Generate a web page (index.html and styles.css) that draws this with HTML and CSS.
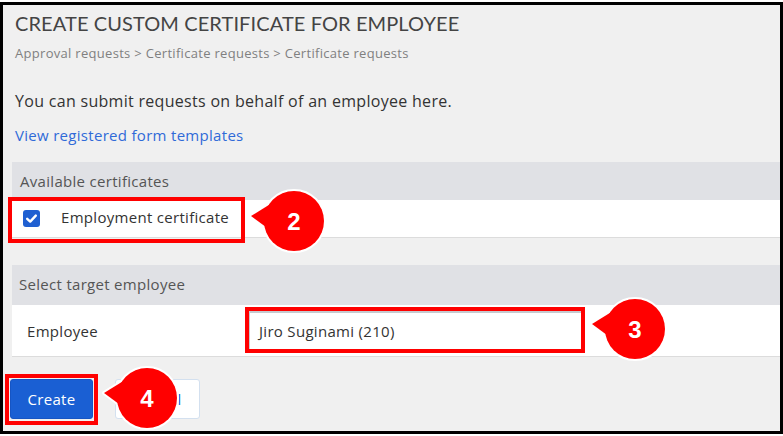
FILE: index.html
```html
<!DOCTYPE html>
<html lang="en">
<head>
<meta charset="utf-8">
<title>Create custom certificate for employee</title>
<link rel="stylesheet" href="styles.css">
</head>
<body>
<div class="frame">
  <h1 class="title">CREATE CUSTOM CERTIFICATE FOR EMPLOYEE</h1>
  <div class="crumbs">Approval requests &gt; Certificate requests &gt; Certificate requests</div>
  <p class="intro">You can submit requests on behalf of an employee here.</p>
  <a class="link" href="#">View registered form templates</a>

  <section class="section sec-certs">
    <div class="band">Available certificates</div>
    <div class="row row-check">
      <span class="checkbox">
        <svg width="17" height="17" viewBox="0 0 17 17"><rect x="0" y="0" width="17" height="17" rx="3" fill="#1f5fd1"/><path d="M4.2 8.8 L7.2 11.6 L12.8 5.6" fill="none" stroke="#fff" stroke-width="2.4" stroke-linecap="round" stroke-linejoin="round"/></svg>
      </span>
      <span class="check-label">Employment certificate</span>
    </div>
  </section>

  <section class="section sec-emp">
    <div class="band band-emp">Select target employee</div>
    <div class="row row-emp">
      <span class="emp-label">Employee</span>
      <div class="input">Jiro Suginami (210)</div>
    </div>
  </section>

  <div class="actions">
    <button class="btn btn-primary">Create</button>
    <button class="btn btn-secondary">Cancel</button>
  </div>

  <div class="hl hl-check"></div>
  <div class="hl hl-input"></div>
  <div class="hl hl-create"></div>

  <svg class="callout c2" width="84" height="70" viewBox="0 0 84 70">
    <g fill="#fff" stroke="#fff" stroke-width="4" stroke-linejoin="round"><path d="M3 28 L24 15 L22 42 Z"/><circle cx="46" cy="33" r="30"/></g>
    <g fill="#f00"><path d="M3 28 L24 15 L22 42 Z"/><circle cx="46" cy="33" r="30"/></g>
    <text x="46" y="42" text-anchor="middle">2</text>
  </svg>
  <svg class="callout c3" width="84" height="70" viewBox="0 0 84 70">
    <g fill="#fff" stroke="#fff" stroke-width="4" stroke-linejoin="round"><path d="M3 28 L24 15 L22 42 Z"/><circle cx="46" cy="33" r="30"/></g>
    <g fill="#f00"><path d="M3 28 L24 15 L22 42 Z"/><circle cx="46" cy="33" r="30"/></g>
    <text x="46" y="42" text-anchor="middle">3</text>
  </svg>
  <svg class="callout c4" width="84" height="70" viewBox="0 0 84 70">
    <g fill="#fff" stroke="#fff" stroke-width="4" stroke-linejoin="round"><path d="M3 28 L24 15 L22 42 Z"/><circle cx="46" cy="33" r="30"/></g>
    <g fill="#f00"><path d="M3 28 L24 15 L22 42 Z"/><circle cx="46" cy="33" r="30"/></g>
    <text x="46" y="42" text-anchor="middle">4</text>
  </svg>
</div>
</body>
</html>
```

FILE: styles.css
```css
* { box-sizing: border-box; }
html, body { margin: 0; padding: 0; background: #fff; }
body { font-family: "Open Sans", Lato, sans-serif; color: #333; letter-spacing: 0.3px; }

.frame {
  position: relative;
  margin-top: 2px;
  width: 783px;
  height: 432px;
  border: 3px solid #000;
  background: #f0f0f0;
  overflow: hidden;
  display: flex;
  flex-direction: column;
  align-items: flex-start;
}

.title {
  margin: 0;
  padding: 6px 12px 0;
  font-family: Lato, "Open Sans", sans-serif;
  font-size: 20px;
  line-height: 24px;
  font-weight: 400;
  color: #444;
  letter-spacing: 0.1px;
}
.crumbs {
  margin-top: 9px;
  padding-left: 12px;
  font-size: 13px;
  line-height: 18px;
  color: #808080;
}
.intro {
  margin: 29px 0 0;
  padding-left: 12px;
  font-size: 16px;
  line-height: 20px;
  color: #333;
}
.link {
  margin-top: 14px;
  margin-left: 12px;
  font-size: 15px;
  line-height: 20px;
  color: #2f6ad8;
  text-decoration: none;
}

.section {
  margin-left: 9px;
  align-self: stretch;
}
.sec-certs { margin-top: 17px; }
.sec-emp { margin-top: 27px; }

.band {
  height: 38px;
  background: #e0e1e5;
  padding-left: 8px;
  font-size: 15px;
  line-height: 38px;
  color: #555;
}
.band-emp { height: 40px; line-height: 38px; padding-left: 7px; }

.row {
  background: #fff;
  border-bottom: 1px solid #dcdcdc;
  display: flex;
  align-items: center;
}
.row-check { height: 38px; padding-left: 11px; }
.checkbox { width: 17px; height: 17px; display: flex; margin-top: -1px; }
.check-label { margin-left: 21px; font-size: 15px; color: #333; margin-top: -4px; }

.row-emp { height: 52px; padding-left: 15px; }
.emp-label { width: 222px; font-size: 15px; color: #333; }
.input {
  width: 333px;
  height: 40px;
  border: 1px solid #c6cacf;
  border-top: 2px solid #c6cacf;
  background: #fff;
  padding-left: 9px;
  font-size: 15px;
  line-height: 36px;
  color: #333;
}

.actions {
  margin-top: 22px;
  margin-left: 7px;
  display: flex;
  gap: 22px;
}
.btn {
  height: 40px;
  border-radius: 3px;
  font-family: "Open Sans", Lato, sans-serif;
  font-size: 15px;
  letter-spacing: 0.3px;
  padding: 0;
}
.btn-primary {
  width: 83px;
  background: #1a5fd3;
  border: 1px solid #1655c4;
  color: #fff;
}
.btn-secondary {
  width: 85px;
  background: #fff;
  border: 1px solid #d3e0ef;
  color: #1a5fd3;
}

.hl {
  position: absolute;
  border: 4px solid #f00;
}
.hl-check { left: 5px; top: 192px; width: 237px; height: 46px; }
.hl-input { left: 242px; top: 302px; width: 340px; height: 46px; }
.hl-create { left: 2px; top: 369px; width: 93px; height: 51px; }

.callout { position: absolute; overflow: visible; }
.callout text {
  font-family: "Liberation Sans", Arial, sans-serif;
  font-weight: 700;
  font-size: 24px;
  letter-spacing: 0;
  fill: #fff;
}
.c2 { left: 245px; top: 183px; }
.c3 { left: 586px; top: 291px; }
.c4 { left: 98px; top: 360px; }
```
